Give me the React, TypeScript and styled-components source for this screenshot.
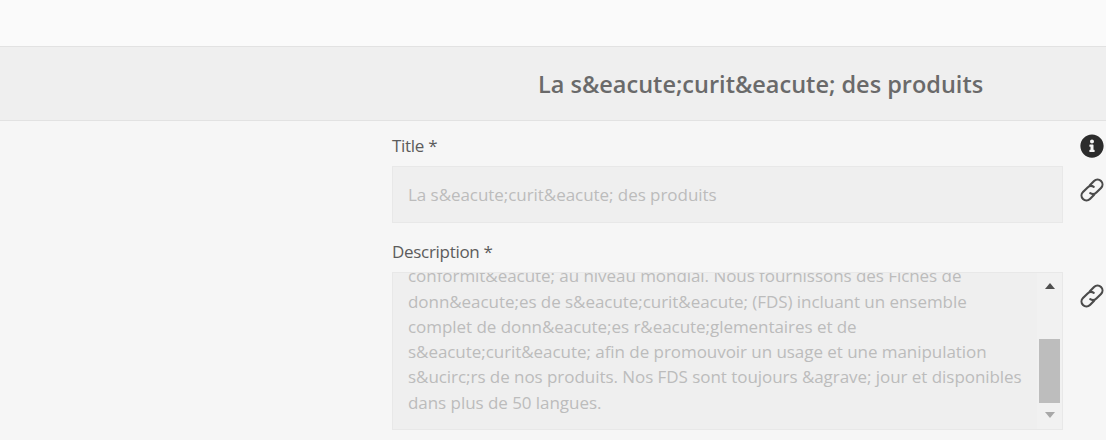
import React from 'react'
import styled, { createGlobalStyle } from 'styled-components'
import { FaInfoCircle } from 'react-icons/fa'

const GlobalStyle = createGlobalStyle`
  html, body {
    margin: 0;
    padding: 0;
    background: #f6f6f6;
    overflow: hidden;
  }
`

const Page = styled.div`
  width: 1106px;
  height: 440px;
  overflow: hidden;
  font-family: 'Open Sans', sans-serif;
  display: flex;
  flex-direction: column;
`

const TopBar = styled.div`
  height: 46px;
  flex: none;
  background: #fafafa;
  border-bottom: 1px solid #e2e2e2;
`

const TitleBar = styled.div`
  height: 73px;
  flex: none;
  background: #efefef;
  border-bottom: 1px solid #e2e2e2;
  display: flex;
  align-items: center;
  padding-left: 538px;
`

const Heading = styled.h1`
  margin: 0;
  font-size: 23.5px;
  font-weight: 600;
  color: #6a6a6a;
  white-space: nowrap;
`

const Body = styled.div`
  flex: 1;
  padding: 14px 0 0 392px;
  display: flex;
  flex-direction: column;
`

const Row = styled.div`
  display: flex;
  align-items: flex-start;
`

const Field = styled.div`
  width: 671px;
  flex: none;
  display: flex;
  flex-direction: column;
`

const Label = styled.label`
  height: 24px;
  margin-bottom: 7px;
  font-size: 17px;
  line-height: 22px;
  color: #5c5c5c;
  letter-spacing: -0.3px;
`

const Input = styled.div`
  height: 57px;
  box-sizing: border-box;
  border: 1px solid #e8e8e8;
  background: #efefef;
  padding: 0 15px;
  display: flex;
  align-items: center;
  font-size: 17px;
  color: #bcbcbc;
  letter-spacing: -0.05px;
`

const TextArea = styled.div`
  height: 158px;
  box-sizing: border-box;
  border: 1px solid #e8e8e8;
  background: #efefef;
  display: flex;
`

const Lines = styled.div`
  flex: 1;
  overflow: hidden;
  padding: 0 15px 14px;
  display: flex;
  flex-direction: column;
  justify-content: flex-end;
  font-size: 17px;
  line-height: 25.3px;
  color: #bcbcbc;
  letter-spacing: -0.05px;
`

const Line = styled.span`
  display: block;
  white-space: nowrap;
  flex: none;
`

const Scrollbar = styled.div`
  width: 25px;
  flex: none;
  background: #f1f1f1;
  display: flex;
  flex-direction: column;
  align-items: center;
  padding: 10px 0 11px;
  box-sizing: border-box;
`

const Arrow = styled.div<{ $up?: boolean }>`
  width: 0;
  height: 0;
  flex: none;
  border-left: 5.5px solid transparent;
  border-right: 5.5px solid transparent;
  ${({ $up }) => ($up ? 'border-bottom: 6px solid #4f4f4f;' : 'border-top: 6px solid #a8a8a8;')}
`

const Track = styled.div`
  flex: 1;
  width: 100%;
  display: flex;
  flex-direction: column;
  justify-content: flex-end;
  align-items: center;
  padding-bottom: 9px;
  box-sizing: border-box;
`

const Thumb = styled.div`
  width: 21px;
  height: 64px;
  background: #bdbdbd;
`

const Side = styled.div`
  margin-left: 16px;
  display: flex;
  flex-direction: column;
  align-items: center;
  width: 26px;
`

const DescriptionRow = styled(Row)`
  margin-top: 18px;
`

const ChainSvg = styled.svg<{ $top: number }>`
  width: 24px;
  height: 24px;
  flex: none;
  margin-top: ${({ $top }) => $top}px;
  fill: none;
  stroke: #4b4b4b;
  stroke-width: 1.7;
  stroke-linecap: round;
`

const InfoIcon = styled(FaInfoCircle)`
  width: 24px;
  height: 24px;
  color: #2c2c2c;
  margin-top: -1px;
`

function ChainIcon({ top }: { top: number }) {
  return (
    <ChainSvg $top={top} viewBox="2.5 2.5 19 19">
      <g transform="rotate(-45 12 12)">
        <path d="M10.5 15.9 H5.8 A3.9 3.9 0 0 1 5.8 8.1 H11 A3.9 3.9 0 0 1 14.8 11.2" />
        <path d="M13.5 8.1 H18.2 A3.9 3.9 0 0 1 18.2 15.9 H13 A3.9 3.9 0 0 1 9.2 12.8" />
      </g>
    </ChainSvg>
  )
}

const text = 'La s&eacute;curit&eacute; des produits'

export default function App() {
  return (
    <Page>
      <GlobalStyle />
      <TopBar />
      <TitleBar>
        <Heading>{text}</Heading>
      </TitleBar>
      <Body>
        <Row>
          <Field>
            <Label>Title *</Label>
            <Input>{text}</Input>
          </Field>
          <Side>
            <InfoIcon />
            <ChainIcon top={20} />
          </Side>
        </Row>
        <DescriptionRow>
          <Field>
            <Label>Description *</Label>
            <TextArea>
              <Lines>
                <Line>conformit&amp;eacute; au niveau mondial. Nous fournissons des Fiches de</Line>
                <Line>donn&amp;eacute;es de s&amp;eacute;curit&amp;eacute; (FDS) incluant un ensemble</Line>
                <Line>complet de donn&amp;eacute;es r&amp;eacute;glementaires et de</Line>
                <Line>s&amp;eacute;curit&amp;eacute; afin de promouvoir un usage et une manipulation</Line>
                <Line>s&amp;ucirc;rs de nos produits. Nos FDS sont toujours &amp;agrave; jour et disponibles</Line>
                <Line>dans plus de 50 langues.</Line>
              </Lines>
              <Scrollbar>
                <Arrow $up />
                <Track>
                  <Thumb />
                </Track>
                <Arrow />
              </Scrollbar>
            </TextArea>
          </Field>
          <Side>
            <ChainIcon top={43} />
          </Side>
        </DescriptionRow>
      </Body>
    </Page>
  )
}
